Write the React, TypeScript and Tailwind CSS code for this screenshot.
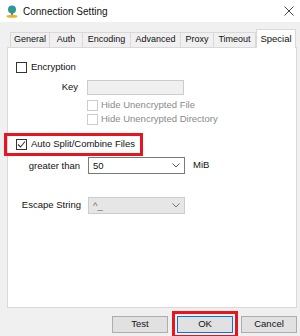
import { ReactNode } from "react";

const tabs = [
  { label: "General", w: "w-[39px]" },
  { label: "Auth", w: "w-[33px]" },
  { label: "Encoding", w: "w-[48px]" },
  { label: "Advanced", w: "w-[50px]" },
  { label: "Proxy", w: "w-[33px]" },
  { label: "Timeout", w: "w-[43px]" },
];

function Check({ checked = false, disabled = false }: { checked?: boolean; disabled?: boolean }) {
  return (
    <span
      className={`w-[11px] h-[11px] shrink-0 border bg-white flex items-center justify-center ${
        disabled ? "border-[#cccccc]" : "border-[#333333]"
      }`}
    >
      {checked && (
        <svg width="9" height="9" viewBox="0 0 9 9">
          <polyline points="1,4.5 3.5,7 8,1.5" fill="none" stroke="#333" strokeWidth="1.1" />
        </svg>
      )}
    </span>
  );
}

function Combo({ value, disabled = false }: { value: string; disabled?: boolean }) {
  return (
    <div
      className={`w-[97px] h-[17px] border flex items-center pl-[4px] pr-[4px] ${
        disabled ? "bg-[#e6e6e6] border-[#cccccc] text-[#6d6d6d]" : "bg-white border-[#7a7a7a]"
      }`}
    >
      <span className="flex-1 leading-none">{value}</span>
      <svg width="8" height="5" viewBox="0 0 8 5">
        <polyline points="0.5,0.5 4,4 7.5,0.5" fill="none" stroke={disabled ? "#777" : "#555"} strokeWidth="1" />
      </svg>
    </div>
  );
}

function Button({ children }: { children: ReactNode }) {
  return (
    <div className="w-[56px] h-[17px] bg-[#e1e1e1] border border-[#adadad] flex items-center justify-center">
      {children}
    </div>
  );
}

export default function App() {
  return (
    <div
      className="w-[300px] h-[336px] bg-[#f0f0f0] flex flex-col overflow-hidden text-[9.5px] text-[#111] whitespace-nowrap"
      style={{ fontFamily: '"Liberation Sans", Arial, sans-serif' }}
    >
      {/* title bar */}
      <div className="h-[22px] bg-white flex items-center pl-[6px] pr-[5px] shrink-0">
        <svg width="12" height="13" viewBox="0 0 12 13">
          <circle cx="6" cy="4.5" r="4" fill="#2d8fcf" />
          <path d="M3 3 Q5 1.5 6 3 T9 4 L9 6 Q6 7 4 6 Z" fill="#3aa546" />
          <rect x="5.2" y="8" width="1.6" height="2.5" fill="#6b5b2e" />
          <ellipse cx="6" cy="11.3" rx="5.5" ry="1.5" fill="#e9b525" />
        </svg>
        <span className="ml-[5px] text-[10px]">Connection Setting</span>
        <svg className="ml-auto mr-[1px]" width="10" height="10" viewBox="0 0 10 10">
          <path d="M0.5 0.5 L9.5 9.5 M9.5 0.5 L0.5 9.5" stroke="#333" strokeWidth="0.9" />
        </svg>
      </div>

      <div className="flex-1 flex flex-col pl-[7px] pr-[3px] pt-[7px]">
        {/* tabs */}
        <div className="h-[18px] flex items-end pl-[3px] text-[9px]">
          {tabs.map((t, i) => (
            <div
              key={t.label}
              className={`${t.w} h-[15px] border-t border-l border-[#d9d9d9] ${
                i === tabs.length - 1 ? "border-r" : ""
              } flex items-center justify-center bg-[#f0f0f0]`}
            >
              {t.label}
            </div>
          ))}
          <div className="w-[40px] h-[19px] -mb-px relative z-10 bg-white border-t border-l border-r border-[#d9d9d9] flex items-start justify-center pt-[2px] text-[9.5px]">
            Special
          </div>
        </div>

        {/* panel */}
        <div className="h-[261px] border border-[#d9d9d9] bg-white pt-[14px] flex flex-col">
          <div className="h-[11px] flex items-center gap-[4px] ml-[8px]">
            <Check />
            <span>Encryption</span>
          </div>

          <div className="mt-[7px] flex items-center">
            <span className="w-[70px] text-right">Key</span>
            <div className="ml-[9px] w-[97px] h-[15px] bg-[#f0f0f0] border border-[#cccccc]" />
          </div>

          <div className="mt-[5px] ml-[79px] h-[11px] flex items-center gap-[3px] text-[#8a8a8a]">
            <Check disabled />
            <span>Hide Unencrypted File</span>
          </div>
          <div className="mt-[3px] ml-[79px] h-[11px] flex items-center gap-[3px] text-[#8a8a8a]">
            <Check disabled />
            <span>Hide Unencrypted Directory</span>
          </div>

          {/* highlighted option */}
          <div className="mt-[8px] -ml-[4px] w-[139px] h-[23px] border-[3px] border-[#e8141e] flex items-center gap-[4px] pl-[9px]">
            <Check checked />
            <span>Auto Split/Combine Files</span>
          </div>

          <div className="mt-px flex items-start">
            <span className="w-[72px] text-right pt-[2px]">greater than</span>
            <div className="ml-[8px]">
              <Combo value="50" />
            </div>
            <span className="ml-[8px] pt-[1px]">MiB</span>
          </div>

          <div className="mt-[23px] flex items-center">
            <span className="w-[73px] text-right">Escape String</span>
            <div className="ml-[7px]">
              <Combo value="^_" disabled />
            </div>
          </div>
        </div>

        {/* buttons */}
        <div className="mt-[3px] flex items-start justify-end">
          <div className="mt-[5px]">
            <Button>Test</Button>
          </div>
          <div className="ml-[4px] border-[3px] border-[#e8141e] p-[2px]">
            <div className="w-[56px] h-[17px] bg-[#e1e1e1] border border-[#0078d7] flex items-center justify-center">
              OK
            </div>
          </div>
          <div className="ml-[3px] mt-[5px]">
            <Button>Cancel</Button>
          </div>
        </div>
      </div>
    </div>
  );
}
